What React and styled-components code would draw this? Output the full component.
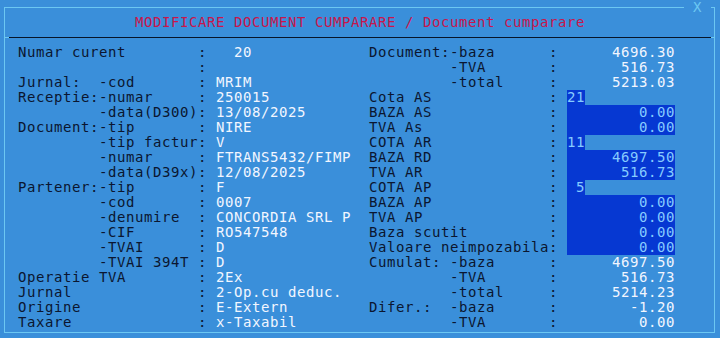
import React from "react";
import styled, { createGlobalStyle } from "styled-components";

const CELL = 9;
const LINE = "#6cc7f2";
const BG = "#3a8fda";

const GlobalStyle = createGlobalStyle`
  html, body { margin: 0; padding: 0; background: ${BG}; }
  #root { width: 720px; height: 338px; }
`;

const Screen = styled.div`
  width: 720px;
  height: 338px;
  box-sizing: border-box;
  padding: 7px 5px 0 4px;
  background: ${BG};
  overflow: hidden;
  font-family: "DejaVu Sans Mono", "Liberation Mono", monospace;
  font-size: 14px;
  letter-spacing: 0.57px;
  line-height: 15px;
  color: #0b1630;
`;

const Frame = styled.div`
  position: relative;
  height: 326px;
  box-sizing: border-box;
  border: 1px solid ${LINE};
  display: flex;
  flex-direction: column;
`;

const CloseBadge = styled.div`
  position: absolute;
  top: -8px;
  left: 679px;
  width: 27px;
  height: 15px;
  background: ${BG};
  color: ${LINE};
  text-align: center;
  white-space: pre;
`;

const Title = styled.div`
  margin-top: 7px;
  height: 15px;
  padding-left: ${15 * CELL - 5}px;
  color: #c8154c;
  white-space: pre;
`;

const Separator = styled.div`
  margin: 7px 0 7px 0;
  height: 1px;
  background: linear-gradient(
    to right,
    ${LINE} 0 4px,
    #071529 4px calc(100% - 3px),
    ${LINE} calc(100% - 3px) 100%
  );
`;

const Body = styled.div`
  display: grid;
  grid-template-columns: ${39 * CELL}px 1fr;
  padding-left: ${2 * CELL - 5}px;
`;

const Panel = styled.div`
  display: flex;
  flex-direction: column;
`;

const Row = styled.div`
  display: grid;
  grid-template-columns: ${20 * CELL}px ${CELL}px ${CELL}px auto;
  height: 15px;
  white-space: pre;
`;

const Label = styled.span`
  color: #0b1630;
`;

const Colon = styled.span`
  color: #0b1630;
`;

const Value = styled.span`
  color: ${(p) => (p.$hl ? "#86ccff" : "#f2f6ff")};
  background: ${(p) => (p.$hl ? "#0638d2" : "transparent")};
  width: ${(p) => (p.$w ? `${p.$w * CELL}px` : "auto")};
  text-align: ${(p) => (p.$right ? "right" : "left")};
  justify-self: start;
  height: 15px;
`;

const leftRows = [
  ["Numar curent", "  20"],
  ["", ""],
  ["Jurnal:  -cod", "MRIM"],
  ["Receptie:-numar", "250015"],
  ["         -data(D300)", "13/08/2025"],
  ["Document:-tip", "NIRE"],
  ["         -tip factur", "V"],
  ["         -numar", "FTRANS5432/FIMP"],
  ["         -data(D39x)", "12/08/2025"],
  ["Partener:-tip", "F"],
  ["         -cod", "0007"],
  ["         -denumire", "CONCORDIA SRL P"],
  ["         -CIF", "RO547548"],
  ["         -TVAI", "D"],
  ["         -TVAI 394T", "D"],
  ["Operatie TVA", "2Ex"],
  ["Jurnal", "2-Op.cu deduc."],
  ["Origine", "E-Extern"],
  ["Taxare", "x-Taxabil"],
];

const rightRows = [
  ["Document:-baza", "4696.30", false, 12],
  ["         -TVA", "516.73", false, 12],
  ["         -total", "5213.03", false, 12],
  ["Cota AS", "21", true, 2],
  ["BAZA AS", "0.00", true, 12],
  ["TVA As", "0.00", true, 12],
  ["COTA AR", "11", true, 2],
  ["BAZA RD", "4697.50", true, 12],
  ["TVA AR", "516.73", true, 12],
  ["COTA AP", "5", true, 2],
  ["BAZA AP", "0.00", true, 12],
  ["TVA AP", "0.00", true, 12],
  ["Baza scutit", "0.00", true, 12],
  ["Valoare neimpozabila", "0.00", true, 12],
  ["Cumulat: -baza", "4697.50", false, 12],
  ["         -TVA", "516.73", false, 12],
  ["         -total", "5214.23", false, 12],
  ["Difer.:  -baza", "-1.20", false, 12],
  ["         -TVA", "0.00", false, 12],
];

export default function App() {
  return (
    <>
      <GlobalStyle />
      <Screen>
        <Frame>
          <CloseBadge> X </CloseBadge>
          <Title>MODIFICARE DOCUMENT CUMPARARE / Document cumparare</Title>
          <Separator />
          <Body>
            <Panel>
              {leftRows.map(([label, value], i) => (
                <Row key={i}>
                  <Label>{label}</Label>
                  <Colon>:</Colon>
                  <span />
                  <Value>{value}</Value>
                </Row>
              ))}
            </Panel>
            <Panel>
              {rightRows.map(([label, value, hl, w], i) => (
                <Row key={i}>
                  <Label>{label}</Label>
                  <Colon>:</Colon>
                  <span />
                  <Value $hl={hl} $w={w} $right>
                    {value}
                  </Value>
                </Row>
              ))}
            </Panel>
          </Body>
        </Frame>
      </Screen>
    </>
  );
}
